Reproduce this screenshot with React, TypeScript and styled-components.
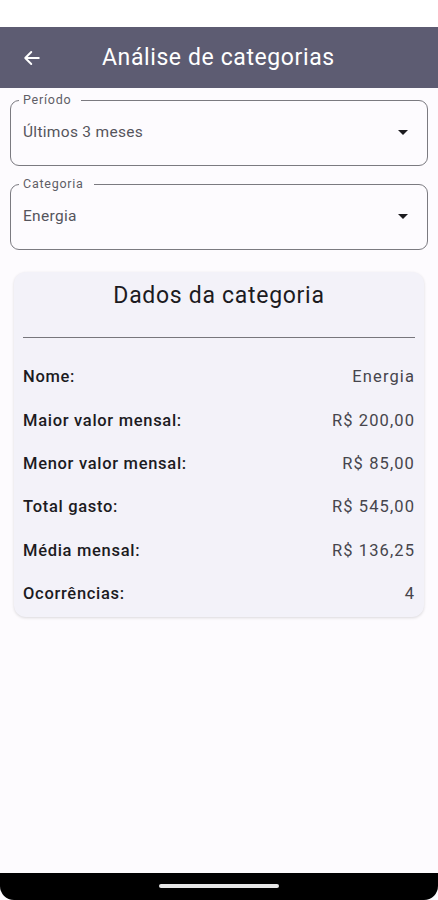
import styled, { createGlobalStyle } from 'styled-components';

const GlobalStyle = createGlobalStyle`
  html, body {
    margin: 0;
    padding: 0;
    background: #fdfbfe;
    font-family: Roboto, "Noto Sans", sans-serif;
  }
`;

const Screen = styled.div`
  min-height: 100vh;
  display: flex;
  flex-direction: column;
  background: #fdfbfe;
`;

const StatusBar = styled.div`
  height: 27px;
  background: #ffffff;
`;

const AppBar = styled.header`
  height: 61px;
  background: #5d5c72;
  display: flex;
  align-items: center;
  padding-left: 22px;
  gap: 60px;
  color: #ffffff;
`;

const BackButton = styled.button`
  border: none;
  background: transparent;
  padding: 0;
  width: 20px;
  height: 20px;
  display: flex;
  align-items: center;
  justify-content: center;
  color: #ffffff;
`;

const Title = styled.h1`
  margin: 0;
  font-size: 23px;
  font-weight: 400;
  letter-spacing: 0.6px;
`;

const Content = styled.main`
  display: flex;
  flex-direction: column;
  padding: 5px 10px 0;
  gap: 11px;
`;

const Field = styled.fieldset`
  margin: 0;
  padding: 0 8px;
  border: 1px solid #7b7a80;
  border-radius: 9px;
`;

const Legend = styled.legend`
  padding: 0 10px 0 4px;
  font-size: 12.5px;
  line-height: 14px;
  letter-spacing: 0.75px;
  color: #5f5e66;
`;

const FieldRow = styled.div`
  height: 50px;
  padding: 0 11px 8px 4px;
  display: flex;
  align-items: center;
  justify-content: space-between;
  font-size: 15.5px;
  letter-spacing: 0.3px;
  color: #55545c;
`;

const Caret = styled.span`
  width: 0;
  height: 0;
  border-left: 5px solid transparent;
  border-right: 5px solid transparent;
  border-top: 5px solid #1c1b1f;
`;

const Card = styled.section`
  margin: 11px 4px 0;
  background: #f3f2f9;
  border-radius: 12px;
  box-shadow: 0 1px 3px rgba(0, 0, 0, 0.14);
  padding: 10px 9px 2px;
`;

const CardTitle = styled.h2`
  margin: 0;
  text-align: center;
  font-size: 23px;
  line-height: 28px;
  font-weight: 400;
  letter-spacing: 0.7px;
  color: #1c1b1f;
`;

const Divider = styled.hr`
  margin: 27px 0 17px;
  border: none;
  border-top: 1px solid #77767c;
`;

const DataRow = styled.div`
  height: 43.4px;
  display: flex;
  align-items: center;
  justify-content: space-between;
  font-size: 16.5px;
`;

const RowLabel = styled.span`
  color: #1c1b1f;
  font-weight: 500;
  letter-spacing: 0.7px;
`;

const RowValue = styled.span`
  color: #46454c;
  letter-spacing: 1.1px;
`;

const Spacer = styled.div`
  flex: 1;
`;

const NavBar = styled.div`
  height: 27px;
  background: #000000;
  border-radius: 0 0 14px 14px;
  display: flex;
  justify-content: center;
  padding-top: 11px;
  box-sizing: border-box;
`;

const Handle = styled.div`
  width: 120px;
  height: 4px;
  border-radius: 2px;
  background: #e6e6e6;
`;

const rows = [
  { label: 'Nome:', value: 'Energia' },
  { label: 'Maior valor mensal:', value: 'R$ 200,00' },
  { label: 'Menor valor mensal:', value: 'R$ 85,00' },
  { label: 'Total gasto:', value: 'R$ 545,00' },
  { label: 'Média mensal:', value: 'R$ 136,25' },
  { label: 'Ocorrências:', value: '4' },
];

function App() {
  return (
    <Screen>
      <GlobalStyle />
      <StatusBar />
      <AppBar>
        <BackButton aria-label="Voltar">
          <svg width="18" height="18" viewBox="0 0 24 24" fill="none" stroke="#fff" strokeWidth="2.6" strokeLinecap="round" strokeLinejoin="round">
            <path d="M21 12H4" />
            <path d="M11 4l-8 8 8 8" />
          </svg>
        </BackButton>
        <Title>Análise de categorias</Title>
      </AppBar>
      <Content>
        <Field>
          <Legend>Período</Legend>
          <FieldRow>
            <span>Últimos 3 meses</span>
            <Caret />
          </FieldRow>
        </Field>
        <Field>
          <Legend>Categoria</Legend>
          <FieldRow>
            <span>Energia</span>
            <Caret />
          </FieldRow>
        </Field>
        <Card>
          <CardTitle>Dados da categoria</CardTitle>
          <Divider />
          {rows.map(r => (
            <DataRow key={r.label}>
              <RowLabel>{r.label}</RowLabel>
              <RowValue>{r.value}</RowValue>
            </DataRow>
          ))}
        </Card>
      </Content>
      <Spacer />
      <NavBar>
        <Handle />
      </NavBar>
    </Screen>
  );
}

export default App;
